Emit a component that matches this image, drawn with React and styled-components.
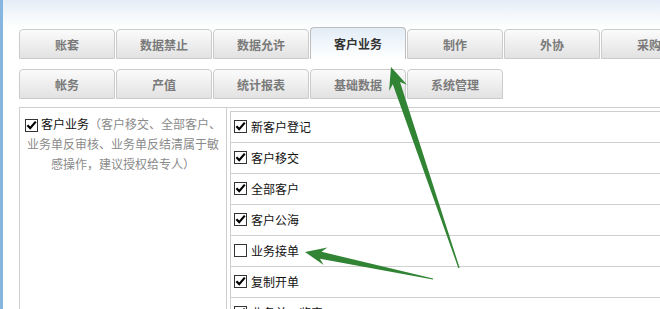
import React from "react";
import styled, { createGlobalStyle } from "styled-components";

const FONT = `"Noto Sans CJK SC", "Noto Sans", "Liberation Sans", sans-serif`;
const LINE = "#cfcfcf";

const TOP_TABS = ["账套", "数据禁止", "数据允许", "客户业务", "制作", "外协", "采购"];
const SUB_TABS = ["帐务", "产值", "统计报表", "基础数据", "系统管理"];
const ACTIVE_TAB = "客户业务";

const PERMISSIONS = [
  { label: "新客户登记", checked: true },
  { label: "客户移交", checked: true },
  { label: "全部客户", checked: true },
  { label: "客户公海", checked: true },
  { label: "业务接单", checked: false },
  { label: "复制开单", checked: true },
  { label: "业务单一览表", checked: true },
];

const GlobalStyle = createGlobalStyle`
  html, body {
    margin: 0;
    padding: 0;
    background: #fff;
    font-family: ${FONT};
  }
`;

const Page = styled.div`
  position: relative;
  display: flex;
  width: 660px;
  height: 309px;
  overflow: hidden;
`;

const SideStrip = styled.div`
  width: 3px;
  flex: none;
  background: #86b6e0;
`;

const Main = styled.main`
  flex: 1;
  min-width: 0;
  padding: 27px 0 0 16px;
  background: linear-gradient(#e4edf7 0, #f6f9fc 18px, #fff 30px) no-repeat;
  overflow: hidden;
`;

const TabRow = styled.div`
  display: flex;
  align-items: flex-end;
  gap: 1px;
  margin-top: ${({ offset }) => offset || 0}px;
`;

const Tab = styled.div`
  flex: none;
  box-sizing: border-box;
  width: 96px;
  height: ${({ active }) => (active ? 32 : 30)}px;
  display: flex;
  align-items: center;
  justify-content: center;
  border: 1px solid ${({ active }) => (active ? "#bdbdbd" : "#cbcbcb")};
  border-bottom: ${({ active }) => (active ? "none" : "1px solid #cbcbcb")};
  border-radius: 4px 4px 0 0;
  background: ${({ active }) =>
    active
      ? "linear-gradient(#e2ecf6, #f7fafd 70%, #fff)"
      : "linear-gradient(#fbfbfb, #ececec 60%, #e2e2e2)"};
  color: ${({ active }) => (active ? "#333" : "#7a7a7a")};
  font-size: 12px;
  font-weight: bold;
  padding-top: ${({ active }) => (active ? 0 : 1)}px;
`;

const Panel = styled.div`
  display: flex;
  width: 680px;
  margin-top: 8px;
  border-top: 1px solid ${LINE};
  border-left: 1px solid ${LINE};
`;

const GroupCell = styled.div`
  flex: none;
  width: 206px;
  border-right: 1px solid ${LINE};
  padding-top: 6px;
  text-align: center;
  white-space: nowrap;
  font-size: 12px;
  line-height: 20px;
`;

const GroupName = styled.span`
  color: #111;
`;

const GroupNote = styled.span`
  color: #8a8a8a;
`;

const ListCell = styled.div`
  flex: 1;
  padding: 3px 0 0 3px;
`;

const List = styled.div`
  border-top: 1px solid ${LINE};
  border-left: 1px solid ${LINE};
`;

const Item = styled.label`
  display: flex;
  align-items: center;
  gap: 4px;
  box-sizing: border-box;
  height: 31px;
  padding: 0 0 2px 3px;
  border-bottom: 1px solid ${LINE};
  font-size: 12px;
  color: #111;
`;

const Box = styled.span`
  display: inline-flex;
  box-sizing: border-box;
  width: 13px;
  height: 13px;
  flex: none;
  vertical-align: -2px;
  margin-right: ${({ inline }) => (inline ? 3 : 0)}px;
  border: 1px solid #333;
  background: #fff;
`;

const Overlay = styled.svg`
  position: absolute;
  left: 0;
  top: 0;
  pointer-events: none;
`;

const Checkbox = ({ checked, inline }) => (
  <Box inline={inline}>
    {checked && (
      <svg width="11" height="11" viewBox="0 0 11 11">
        <path d="M1.4 5.2 L4.2 8.1 L9.8 1.6" fill="none" stroke="#000" strokeWidth="2.2" />
      </svg>
    )}
  </Box>
);

// tapered annotation arrow, tip -> tail
const arrowPoints = (tip, tail, headLen, headHalf, neck) => {
  const dx = tail[0] - tip[0];
  const dy = tail[1] - tip[1];
  const len = Math.hypot(dx, dy);
  const u = [dx / len, dy / len];
  const n = [-u[1], u[0]];
  const at = (a, b) => [tip[0] + u[0] * a + n[0] * b, tip[1] + u[1] * a + n[1] * b];
  const pts = [
    tip,
    at(headLen + 3, headHalf),
    at(headLen - 2, neck),
    [tail[0] + n[0] * 0.6, tail[1] + n[1] * 0.6],
    [tail[0] - n[0] * 0.6, tail[1] - n[1] * 0.6],
    at(headLen - 2, -neck),
    at(headLen + 3, -headHalf),
  ];
  return pts.map((p) => p.map((v) => v.toFixed(1)).join(",")).join(" ");
};

const Arrows = () => (
  <Overlay width="660" height="309">
    <polygon points={arrowPoints([391, 67], [459, 268], 19, 9.5, 3.8)} fill="#318434" />
    <polygon points={arrowPoints([305, 252], [433, 279], 18, 9, 3.6)} fill="#318434" />
  </Overlay>
);

const App = () => (
  <>
    <GlobalStyle />
    <Page>
      <SideStrip />
      <Main>
        <TabRow>
          {TOP_TABS.map((t) => (
            <Tab key={t} active={t === ACTIVE_TAB}>
              {t}
            </Tab>
          ))}
        </TabRow>
        <TabRow offset={10}>
          {SUB_TABS.map((t) => (
            <Tab key={t}>{t}</Tab>
          ))}
        </TabRow>
        <Panel>
          <GroupCell>
            <Checkbox checked inline />
            <GroupName>客户业务</GroupName>
            <GroupNote>（客户移交、全部客户、</GroupNote>
            <br />
            <GroupNote>业务单反审核、业务单反结清属于敏</GroupNote>
            <br />
            <GroupNote>感操作，建议授权给专人）</GroupNote>
          </GroupCell>
          <ListCell>
            <List>
              {PERMISSIONS.map((p) => (
                <Item key={p.label}>
                  <Checkbox checked={p.checked} />
                  {p.label}
                </Item>
              ))}
            </List>
          </ListCell>
        </Panel>
      </Main>
      <Arrows />
    </Page>
  </>
);

export default App;
